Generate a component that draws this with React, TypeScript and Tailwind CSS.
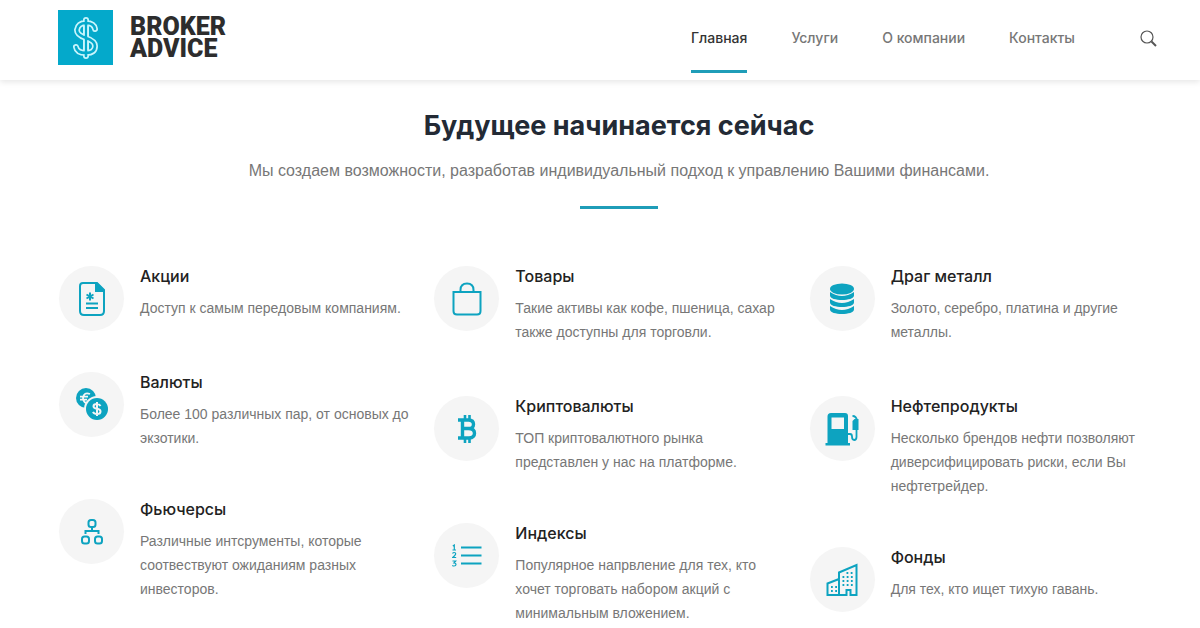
import type { ReactNode } from "react";

type Asset = {
  title: string;
  text: string;
  icon: ReactNode;
};

const NAV_LINKS = [
  { label: "Главная", active: true },
  { label: "Услуги", active: false },
  { label: "О компании", active: false },
  { label: "Контакты", active: false },
];

function DocumentIcon() {
  return (
    <svg width="26" height="34" viewBox="0 0 26 34" fill="none" stroke="currentColor" strokeWidth="2">
      <path d="M4 1h14l7 7v21q0 4-4 4H5q-4 0-4-4V4q0-3 3-3Z" />
      <path d="M17 1v8h8Z" fill="currentColor" />
      <path d="M11 10.500v8M7.500 12.500l7 4M14.500 12.500l-7 4" />
      <path d="M7 21.500h12M7 26h12" />
    </svg>
  );
}

function CoinsIcon() {
  return (
    <svg width="34" height="34" viewBox="0 0 34 34">
      <circle cx="11" cy="10" r="10" fill="currentColor" />
      <path d="M15 6q-6-2.500-7 4 .5 6 6 5M5 8.700h8M5 11.700h7" fill="none" stroke="#f5f5f5" strokeWidth="1.800" />
      <circle cx="22" cy="21" r="13" fill="#f5f5f5" />
      <circle cx="22" cy="21" r="11" fill="currentColor" />
      <path
        d="M25.500 18q-1-2-3.500-2-3.500 0-3.500 2.300 0 2 3.500 2.500t3.500 2.700Q25.500 26 22 26q-3 0-4-2.200M22 14v14"
        fill="none"
        stroke="#f5f5f5"
        strokeWidth="2"
      />
    </svg>
  );
}

function HierarchyIcon() {
  return (
    <svg width="22" height="26" viewBox="0 0 22 26" fill="none" stroke="currentColor" strokeWidth="2">
      <rect x="7.500" y="1" width="7" height="7" rx="2.500" />
      <rect x="1" y="17.500" width="7" height="7" rx="2.500" />
      <rect x="14" y="17.500" width="7" height="7" rx="2.500" />
      <path d="M11 8v4M4.500 15V12h13v3" />
    </svg>
  );
}

function BagIcon() {
  return (
    <svg width="30" height="34" viewBox="0 0 30 34" fill="none" stroke="currentColor" strokeWidth="2">
      <path d="M1.500 10h27v19q0 3.500-3.500 3.500H5q-3.500 0-3.500-3.500Z" />
      <path d="M8.500 10V8q0-6.500 6.500-6.500T21.500 8v2" />
    </svg>
  );
}

function BitcoinIcon() {
  return (
    <svg width="20" height="28" viewBox="0 0 20 28" fill="none" stroke="currentColor">
      <path d="M1 5h10.500q5 0 5 4.300T11.500 13.500H6M11.500 13.500q6 .3 6 4.700T12 23H1M5.500 5v18" strokeWidth="3.400" />
      <path d="M8 0v5M12.500 0v5M8 23v5M12.500 23v5" strokeWidth="2.600" />
    </svg>
  );
}

function NumberedListIcon() {
  return (
    <svg width="30" height="24" viewBox="0 0 30 24" fill="none" stroke="currentColor">
      <path d="M9 3.500h20.500M9 11.500h20.500M9 19.500h20.500" strokeWidth="2" />
      <path
        d="M.8 2l1.500-1v5M.5 6h3.500M.5 9.500q.5-1 1.700-1 1.500 0 1.500 1.200Q3.700 11 .7 13.500h3.500M.5 17h3.200l-1.700 2q2 0 2 1.500T2 22Q.9 22 .4 21.200"
        strokeWidth="1.200"
      />
    </svg>
  );
}

function StackIcon() {
  return (
    <svg width="26" height="32" viewBox="0 0 26 32" fill="currentColor">
      <ellipse cx="13" cy="6" rx="12" ry="5.500" />
      <path d="M1 9q12 8 24 0v3.500c0 6-24 6-24 0Z" />
      <path d="M1 16q12 8 24 0v3.500c0 6-24 6-24 0Z" />
      <path d="M1 23q12 8 24 0v3.500c0 6-24 6-24 0Z" />
    </svg>
  );
}

function FuelIcon() {
  return (
    <svg width="34" height="34" viewBox="0 0 34 34">
      <path
        d="M6 1h14q3 0 3 3v27h2v2.500H.5V31h2V4.500Q2.500 1 6 1ZM6.500 5.500V17H19V5.500Z"
        fill="currentColor"
        fillRule="evenodd"
      />
      <path d="M23 22h2q2 0 2 2.500 0 3.500 2.200 3.500t2.300-3V14" fill="none" stroke="currentColor" strokeWidth="1.800" />
      <path d="M27.500 4q4 0 4.500 5" fill="none" stroke="currentColor" strokeWidth="1.800" />
      <path d="M27.500 9l2-2h4v11h-6Z" fill="currentColor" />
    </svg>
  );
}

function BuildingsIcon() {
  return (
    <svg width="32" height="34" viewBox="0 0 32 34" fill="none" stroke="currentColor">
      <path d="M1.500 32V20.500L13 16V9.500L30.500 2v30H24.500v-5h-4v5ZM13 16v16" strokeWidth="2" />
      <path
        d="M16.500 14h11M16.500 18h11M16.500 22h11M20.500 10h7M5 24h6M5 28h6"
        strokeWidth="1.800"
        strokeDasharray="1.800 2.400"
      />
    </svg>
  );
}

const COLUMNS: Asset[][] = [
  [
    { title: "Акции", text: "Доступ к самым передовым компаниям.", icon: <DocumentIcon /> },
    { title: "Валюты", text: "Более 100 различных пар, от основых до экзотики.", icon: <CoinsIcon /> },
    {
      title: "Фьючерсы",
      text: "Различные интсрументы, которые соотвествуют ожиданиям разных инвесторов.",
      icon: <HierarchyIcon />,
    },
  ],
  [
    { title: "Товары", text: "Такие активы как кофе, пшеница, сахар также доступны для торговли.", icon: <BagIcon /> },
    { title: "Криптовалюты", text: "ТОП криптовалютного рынка представлен у нас на платформе.", icon: <BitcoinIcon /> },
    {
      title: "Индексы",
      text: "Популярное напрвление для тех, кто хочет торговать набором акций с минимальным вложением.",
      icon: <NumberedListIcon />,
    },
  ],
  [
    { title: "Драг металл", text: "Золото, серебро, платина и другие металлы.", icon: <StackIcon /> },
    {
      title: "Нефтепродукты",
      text: "Несколько брендов нефти позволяют диверсифицировать риски, если Вы нефтетрейдер.",
      icon: <FuelIcon />,
    },
    { title: "Фонды", text: "Для тех, кто ищет тихую гавань.", icon: <BuildingsIcon /> },
  ],
];

function Logo() {
  return (
    <a href="#" className="flex items-center gap-[17px]">
      <span className="flex size-[55px] items-center justify-center bg-[#04a9cb] text-[#c9f5fc]">
        <svg width="28" height="42" viewBox="0 0 28 42" fill="none" strokeLinecap="round" strokeLinejoin="round">
          <path
            d="M23 12q-1-6-9-6t-9 7q0 5 9 8t9 8q0 7-9 7t-10-6M14 3v36"
            stroke="currentColor"
            strokeWidth="6"
          />
          <path d="M23 12q-1-6-9-6t-9 7q0 5 9 8t9 8q0 7-9 7t-10-6M14 3v36" stroke="#04a9cb" strokeWidth="2.600" />
          <path d="M12 9v9M16 9v10M12 23v10M16 24v9" stroke="currentColor" strokeWidth="1.400" />
        </svg>
      </span>
      <span className="flex flex-col font-['Roboto',sans-serif] text-[25px] leading-[22px] font-black text-[#2d2d2d]">
        <span>BROKER</span>
        <span>ADVICE</span>
      </span>
    </a>
  );
}

function AssetItem({ title, text, icon }: Asset) {
  return (
    <li className="mb-[47px] flex gap-4 first:mb-[50px] last:mb-0">
      <span className="mt-[2px] -mb-3 flex size-[65px] shrink-0 items-center justify-center rounded-full bg-[#f5f5f5] text-[#0da3c0]">
        {icon}
      </span>
      <div className="max-w-[270px]">
        <h3 className="font-['Inter',sans-serif] text-[16px] leading-6 font-medium text-[#222]">{title}</h3>
        <p className="mt-2 text-[14px] leading-6">{text}</p>
      </div>
    </li>
  );
}

export default function App() {
  return (
    <div className="bg-white font-['Liberation_Sans',sans-serif] text-[#777]">
      <header className="flex h-20 items-stretch justify-between pr-[43px] pl-[58px] shadow-[0_2px_6px_rgba(0,0,0,0.1)]">
        <div className="flex items-center pb-[5px]">
          <Logo />
        </div>
        <div className="flex">
          <nav className="flex gap-11 pb-[7px] font-['Inter',sans-serif] text-[14px] font-medium">
            {NAV_LINKS.map((link) => (
              <a
                key={link.label}
                href="#"
                className={
                  link.active
                    ? "flex items-center border-b-3 border-[#1f9db8] pt-1 text-[#333]"
                    : "flex items-center border-b-3 border-transparent pt-1"
                }
              >
                {link.label}
              </a>
            ))}
          </nav>
          <button type="button" aria-label="Поиск" className="ml-[65px] pb-1 text-[#555]">
            <svg width="17" height="17" viewBox="0 0 17 17" fill="none" stroke="currentColor">
              <circle cx="7" cy="7" r="6" strokeWidth="1.200" />
              <path d="M11.500 11.500l4.500 4.500" strokeWidth="2" />
            </svg>
          </button>
        </div>
      </header>

      <main className="pt-7 pr-[21px] pl-[59px]">
        <div className="flex flex-col items-center text-center">
          <h1 className="font-['Inter',sans-serif] text-[27px] leading-9 font-bold text-[#232a35]">
            Будущее начинается сейчас
          </h1>
          <p className="mt-[13px] text-[16px] leading-7">
            Мы создаем возможности, разработав индивидуальный подход к управлению Вашими финансами.
          </p>
          <hr className="mt-[21px] h-[3px] w-[78px] border-0 bg-[#1f9db8]" />
        </div>

        <div className="mt-[55px] grid grid-cols-3 gap-x-1.5">
          {COLUMNS.map((column) => (
            <ul key={column[0].title}>
              {column.map((asset) => (
                <AssetItem key={asset.title} {...asset} />
              ))}
            </ul>
          ))}
        </div>
      </main>
    </div>
  );
}
